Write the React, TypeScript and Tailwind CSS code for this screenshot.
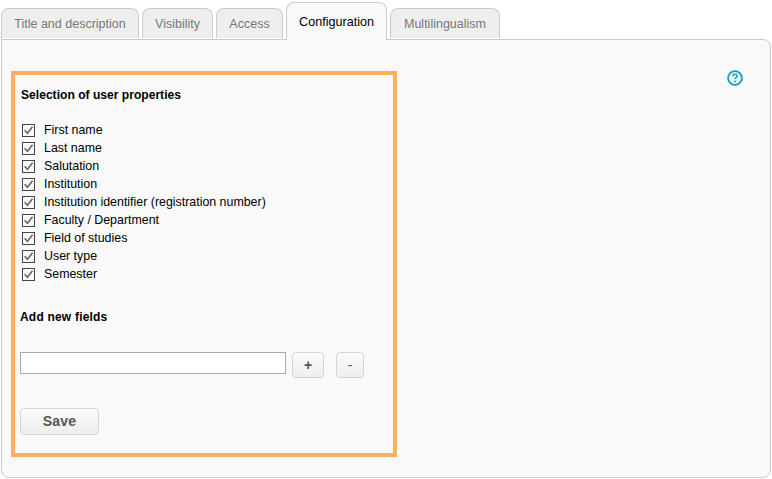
import React from "react";

const items = [
  "First name",
  "Last name",
  "Salutation",
  "Institution",
  "Institution identifier (registration number)",
  "Faculty / Department",
  "Field of studies",
  "User type",
  "Semester",
];

const Tab = ({ label, w }: { label: string; w: string }) => (
  <div className={`${w} h-[30px] mb-px flex items-center justify-center bg-[#eeeeee] border border-b-0 border-[#cccccc] rounded-t-[8px] text-[12.5px] text-[#777777] pt-px`}>
    {label}
  </div>
);

const Check = () => (
  <span className="w-[13px] h-[13px] border border-[#444444] bg-[#f9f9f9] flex items-center justify-center shrink-0">
    <svg width="11" height="11" viewBox="0 0 11 11" fill="none">
      <path d="M1.6 5.2 L4.4 8.2 L9.6 1.8" stroke="#666666" strokeWidth="1.6" />
    </svg>
  </span>
);

const btn = "border border-[#d4d4d4] rounded-[4px] bg-gradient-to-b from-[#fafafa] to-[#eeeeee] font-bold text-[#555555]";

export default function App() {
  return (
    <div className="w-[772px] h-[479px] bg-white pl-px pr-px pt-[2px] font-['Liberation_Sans',Arial,sans-serif] overflow-hidden">
      <div className="flex items-end gap-[3px] h-[37px] relative z-10">
        <Tab label="Title and description" w="w-[138px]" />
        <Tab label="Visibility" w="w-[71px]" />
        <Tab label="Access" w="w-[67px]" />
        <div className="w-[101px] h-[38px] flex items-center justify-center bg-[#f9f9f9] border border-b-0 border-[#cccccc] rounded-t-[8px] text-[12.6px] text-black pt-px -mb-px">
          Configuration
        </div>
        <Tab label="Multilingualism" w="w-[110px]" />
      </div>
      <div className="w-[770px] h-[439px] bg-[#f9f9f9] border border-[#cccccc] rounded-b-[8px] rounded-tr-[8px] flex items-start justify-between pl-[9px] pt-[31px] pr-[27px]">
        <div className="w-[386px] h-[386px] border-[4px] border-[#ffad60] pl-[5px] flex flex-col items-start">
          <div className="mt-[13px] h-[14px] leading-[14px] text-[12.1px] font-bold text-black pl-px">Selection of user properties</div>
          <div className="mt-[19px] flex flex-col pl-[2px]">
            {items.map((t) => (
              <label key={t} className="h-[18px] flex items-center gap-[9px] text-[12.4px] text-black">
                <Check />
                <span>{t}</span>
              </label>
            ))}
          </div>
          <div className="mt-[27px] h-[14px] leading-[14px] text-[12px] tracking-[0.2px] font-bold text-black">Add new fields</div>
          <div className="mt-[28px] flex items-start">
            <input className="w-[266px] h-[22px] bg-white border border-[#aaaaaa] outline-none" />
            <button className={`ml-[6px] w-[32px] h-[26px] text-[14px] ${btn}`}>+</button>
            <button className={`ml-[12px] w-[28px] h-[26px] text-[14px] font-normal ${btn}`}>-</button>
          </div>
          <button className={`mt-[30px] w-[79px] h-[27px] text-[14px] tracking-[0.2px] ${btn}`}>Save</button>
        </div>
        <svg className="-mt-px" width="16" height="16" viewBox="0 0 16 16" fill="none">
          <circle cx="8" cy="8" r="6.9" stroke="#0f9fbf" strokeWidth="1.8" />
          <path d="M5.8 6.3 C5.8 4.9 6.8 4.2 8 4.2 C9.3 4.2 10.2 5 10.2 6.1 C10.2 7.5 8 7.6 8 9.3" stroke="#0f9fbf" strokeWidth="1.5" fill="none" />
          <circle cx="8" cy="11.4" r="1" fill="#0f9fbf" />
        </svg>
      </div>
    </div>
  );
}
